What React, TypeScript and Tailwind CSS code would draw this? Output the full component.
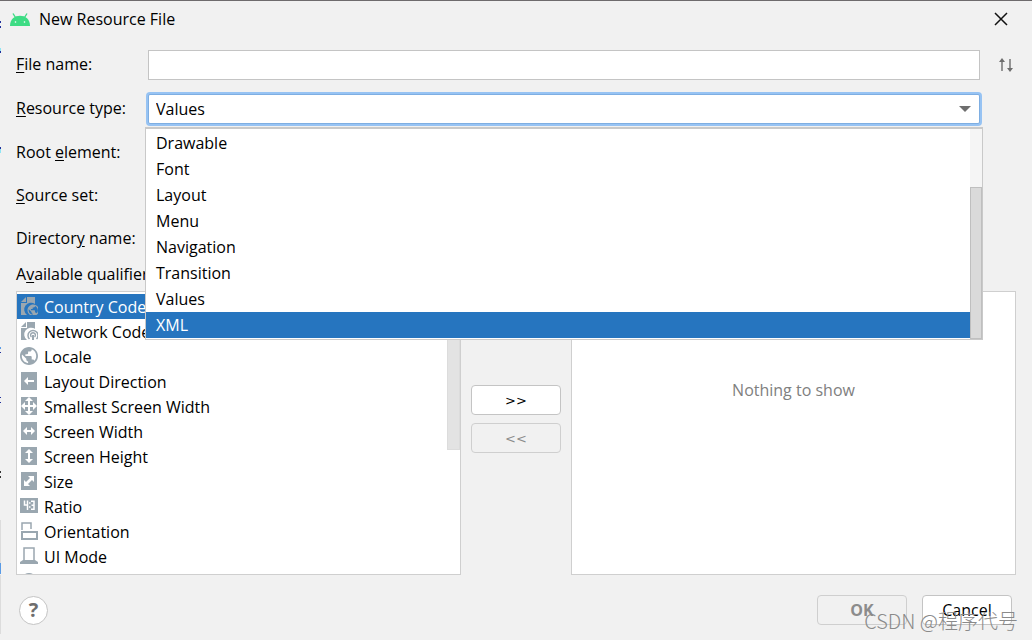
import { useState } from "react";
import type { ReactNode } from "react";

const resourceTypes = ["Drawable", "Font", "Layout", "Menu", "Navigation", "Transition", "Values", "XML"];

const Page = () => (
  <>
    <path d="M1 5L6 0V5Z" fill="currentColor" />
    <path d="M7 0H15V7A6 6 0 0 0 7 18H1V6H7Z" fill="currentColor" />
  </>
);

const Globe = () => (
  <path
    fill="currentColor"
    transform="scale(0.9) translate(-2 -2)"
    d="M12 2C6.480 2 2 6.480 2 12s4.480 10 10 10 10-4.480 10-10S17.520 2 12 2zm-1 17.930c-3.950-.49-7-3.850-7-7.930 0-.62.08-1.210.21-1.790L9 15v1c0 1.100.9 2 2 2v1.930zm6.900-2.540c-.26-.81-1-1.390-1.900-1.390h-1v-3c0-.55-.45-1-1-1H8v-2h2c.55 0 1-.45 1-1V7h2c1.100 0 2-.9 2-2v-.41c2.930 1.190 5 4.060 5 7.410 0 2.080-.8 3.970-2.100 5.390z"
  />
);

const Tile = ({ children }: { children: ReactNode }) => (
  <>
    <path d="M1 0H17V18H1Z" fill="currentColor" />
    <g fill="#fff">{children}</g>
  </>
);

const qualifiers: { name: string; icon: ReactNode }[] = [
  {
    name: "Country Code",
    icon: (
      <>
        <Page />
        <g transform="translate(7.500 7.500) scale(0.64)">
          <Globe />
        </g>
      </>
    ),
  },
  {
    name: "Network Code",
    icon: (
      <>
        <Page />
        <circle cx="13" cy="13" r="6.500" fill="#fff" />
        <g fill="none" stroke="currentColor" strokeWidth="1.500">
          <path d="M9.500 17A5 5 0 1 1 16.500 17" />
          <path d="M11.500 15A2.400 2.400 0 1 1 14.500 15" />
          <path d="M13 13V18" strokeWidth="2" />
        </g>
      </>
    ),
  },
  { name: "Locale", icon: <Globe /> },
  { name: "Layout Direction", icon: <Tile><path d="M4 9L8 5V8H14V10H8V13Z" /></Tile> },
  {
    name: "Smallest Screen Width",
    icon: (
      <Tile>
        <path d="M9 0L13 4H10V8H13V5L17 9L13 13V10H10V14H13L9 18L5 14H8V10H5V13L1 9L5 5V8H8V4H5Z" />
      </Tile>
    ),
  },
  { name: "Screen Width", icon: <Tile><path d="M3 9L7 5V8H11V5L15 9L11 13V10H7V13Z" /></Tile> },
  { name: "Screen Height", icon: <Tile><path d="M9 2L13 6H10V12H13L9 16L5 12H8V6H5Z" /></Tile> },
  { name: "Size", icon: <Tile><path d="M8 4H14V10L12 8L8 12L10 14H4V8L6 10L10 6Z" /></Tile> },
  {
    name: "Ratio",
    icon: (
      <>
        <path d="M0 1H18V16H0Z" fill="currentColor" />
        <path
          d="M4.500 3.500V8H7M7.500 3.500V13M9 6H10.500M9 10H10.500M11 4.300H14V12.300H11M11.500 8.200H14"
          fill="none"
          stroke="#fff"
          strokeWidth="1.500"
        />
      </>
    ),
  },
  {
    name: "Orientation",
    icon: (
      <g fill="none" stroke="currentColor">
        <path d="M2 8V1H11V7" strokeWidth="1.500" />
        <path d="M2 10H17V17H2Z" strokeWidth="2" />
      </g>
    ),
  },
  {
    name: "UI Mode",
    icon: (
      <>
        <path d="M4 14V1H14V14" fill="none" stroke="currentColor" strokeWidth="1.500" />
        <path d="M3 13H15L18 15V17H0V15Z" fill="currentColor" />
      </>
    ),
  },
];

const QualifierIcon = ({ children }: { children: ReactNode }) => (
  <svg width="18" height="18" viewBox="0 0 18 18" className="mb-0.5 shrink-0 text-[#9aa7b0]" aria-hidden="true">
    {children}
  </svg>
);

const AndroidLogo = () => (
  <svg width="20" height="13" viewBox="0 0 20 13" aria-hidden="true">
    <path d="M3 0.500L5.500 4.500M17 0.500L14.500 4.500" stroke="#3ddc84" strokeWidth="1.400" />
    <path d="M0 13C0 6 4.500 2.800 10 2.800C15.500 2.800 20 6 20 13Z" fill="#3ddc84" />
    <circle cx="5.500" cy="9" r="0.800" fill="#fff" />
    <circle cx="14.500" cy="9" r="0.800" fill="#fff" />
  </svg>
);

// Slivers of the editor that show past the dialog's left edge
const EditorEdge = () => (
  <svg width="1" height="640" className="pointer-events-none absolute top-0 left-0" aria-hidden="true">
    <path d="M0.500 20V22M0.500 25V27M0.500 50V52M0.500 146V148M0.500 351V352M0.500 396V397M0.500 401V402" stroke="#1f2f9c" />
    <path d="M0.500 47V50M0.500 148V152" stroke="#8fe6f5" />
    <path d="M0.500 346V348M0.500 562V573" stroke="#5a9be6" />
    <path d="M0.500 470V472M0.500 475V477" stroke="#333" />
    <path d="M0.500 519V562M0.500 574V633" stroke="#dcdcdc" />
  </svg>
);

const Mnemonic = ({ children }: { children: string }) => <u className="underline-offset-2">{children}</u>;

const fieldClass = "h-[30px] w-full border border-[#c4c4c4] bg-white px-2 outline-none";

const App = () => {
  const [fileName, setFileName] = useState("");
  const [resourceType, setResourceType] = useState("Values");
  const [highlighted, setHighlighted] = useState("XML");
  const [qualifier, setQualifier] = useState("Country Code");

  return (
    <div className="relative flex min-h-screen flex-col border-t border-[#6e6b6d] bg-[#f1f1f1] font-['Open_Sans','Noto_Sans_CJK_SC',sans-serif] text-[16px] leading-5 text-black">
      <EditorEdge />

      {/* Title bar */}
      <header className="flex h-[42px] items-start justify-between pt-2 pr-6 pl-[10px]">
        <div className="flex items-center gap-[9px]">
          <AndroidLogo />
          <h1>New Resource File</h1>
        </div>
        <button aria-label="Close" className="flex h-5 w-[14px] items-center justify-center">
          <svg width="14" height="14" viewBox="0 0 14 14">
            <path d="M1 1L13 13M13 1L1 13" stroke="#111" strokeWidth="1.500" />
          </svg>
        </button>
      </header>

      {/* Form */}
      <div className="grid grid-cols-[132px_1fr_52px] grid-rows-[44px_44px_43px_43px_43px] items-center pl-4">
        <label htmlFor="file-name" className="pb-0.5"><Mnemonic>F</Mnemonic>ile name:</label>
        <input id="file-name" value={fileName} onChange={(e) => setFileName(e.target.value)} className={fieldClass} />
        <button aria-label="Swap" className="mx-auto flex w-4 justify-center">
          <svg width="16" height="14" viewBox="0 0 16 14">
            <path d="M4 2V13M12 1V12" stroke="#6e6e6e" strokeWidth="1.400" />
            <path d="M4 0L7 4H1ZM12 14L15 10H9Z" fill="#6e6e6e" />
          </svg>
        </button>

        <label htmlFor="resource-type" className="pb-0.5"><Mnemonic>R</Mnemonic>esource type:</label>
        <div className="relative col-start-2">
          <select
            id="resource-type"
            value={resourceType}
            onChange={(e) => setResourceType(e.target.value)}
            className="block h-[30px] w-full appearance-none rounded-xs border border-[#7eaee2] bg-white px-[7px] ring-2 ring-[#97c3f3] outline-none"
          >
            {resourceTypes.map((type) => (
              <option key={type}>{type}</option>
            ))}
          </select>
          <svg width="12" height="6" viewBox="0 0 12 6" className="pointer-events-none absolute top-3 right-[9px]">
            <path d="M0 0H12L6 6Z" fill="#6e6e6e" />
          </svg>

          {/* Open list */}
          <div className="absolute top-[33px] -right-[3px] -left-[3px] z-10 flex border border-t-2 border-[#c9c9c9] bg-white">
            <ul role="listbox" aria-label="Resource type" className="flex-1 py-px">
              {resourceTypes.map((type) => (
                <li
                  key={type}
                  role="option"
                  aria-selected={type === highlighted}
                  onMouseEnter={() => setHighlighted(type)}
                  onClick={() => setResourceType(type)}
                  className={`flex h-[26px] items-center px-[10px] pb-px ${type === highlighted ? "bg-[#2675bf] text-white" : ""}`}
                >
                  {type}
                </li>
              ))}
            </ul>
            <div className="flex w-3 flex-col bg-[#f5f5f5] pt-[58px]">
              <div className="flex-1 border border-[#bfbfbf] bg-[#dadada]" />
            </div>
          </div>
        </div>

        <label htmlFor="root-element" className="col-start-1 pb-0.5">Root <Mnemonic>e</Mnemonic>lement:</label>
        <input id="root-element" className={fieldClass} />

        <label htmlFor="source-set" className="col-start-1 pb-0.5"><Mnemonic>S</Mnemonic>ource set:</label>
        <select id="source-set" className={`appearance-none ${fieldClass}`} />

        <label htmlFor="directory-name" className="col-start-1 pb-0.5">Director<Mnemonic>y</Mnemonic> name:</label>
        <input id="directory-name" className={fieldClass} />
      </div>

      {/* Qualifiers */}
      <h2 className="h-[31px] pt-1 pl-4">A<Mnemonic>v</Mnemonic>ailable qualifiers:</h2>
      <div className="grid flex-1 grid-cols-[1fr_110px_1fr] px-4">
        <div className="flex h-[284px] overflow-hidden border border-[#cfcfcf] bg-white">
          <ul role="listbox" aria-label="Available qualifiers" className="flex-1 pt-[2px]">
            {qualifiers.map(({ name, icon }) => (
              <li
                key={name}
                role="option"
                aria-selected={name === qualifier}
                onClick={() => setQualifier(name)}
                className={`flex h-[25px] items-center gap-[6px] pl-[3px] ${name === qualifier ? "bg-[#2675bf] text-white" : ""}`}
              >
                <QualifierIcon>{icon}</QualifierIcon>
                {name}
              </li>
            ))}
            <li role="option" aria-selected={false} aria-label="Night Mode" className="flex h-[25px] items-center pl-[3px]">
              <QualifierIcon>
                <circle cx="9" cy="9" r="8" fill="currentColor" />
              </QualifierIcon>
            </li>
          </ul>
          <div className="h-[158px] w-[13px] border border-[#dcdcdc] bg-[#e3e3e3]" />
        </div>

        <div className="flex flex-col gap-2 px-[10px] pt-[94px] font-['DejaVu_Sans',sans-serif] text-[13px]">
          <button className="h-[30px] rounded-sm border border-[#c4c4c4] bg-white pt-0.5">&gt;&gt;</button>
          <button disabled className="h-[30px] rounded-sm border border-[#cfcfcf] pt-0.5 text-[#8c8c8c]">&lt;&lt;</button>
        </div>

        <div className="h-[284px] border border-[#cfcfcf] bg-white pt-[88px] text-center text-[#808080]">Nothing to show</div>
      </div>

      {/* Footer */}
      <footer className="flex items-center justify-between pt-5 pr-5 pb-[15px] pl-[19px]">
        <button aria-label="Help" className="flex h-[29px] w-[29px] items-center justify-center rounded-full border border-[#c4c4c4] bg-white text-[20px] font-bold text-[#6e6e6e]">
          ?
        </button>
        <div className="flex gap-[15px]">
          <button disabled className="h-[30px] w-[90px] rounded-sm border border-[#cfcfcf] font-bold text-[#8c8c8c]">OK</button>
          <button className="h-[30px] w-[90px] rounded-sm border border-[#c4c4c4] bg-white">Cancel</button>
        </div>
      </footer>

      <span className="pointer-events-none absolute right-[14px] bottom-[7px] font-['Noto_Sans_CJK_SC',sans-serif] text-[20px] leading-6 font-light text-[#8a8a8a]">
        CSDN @程序代号
      </span>
    </div>
  );
};

export default App;
